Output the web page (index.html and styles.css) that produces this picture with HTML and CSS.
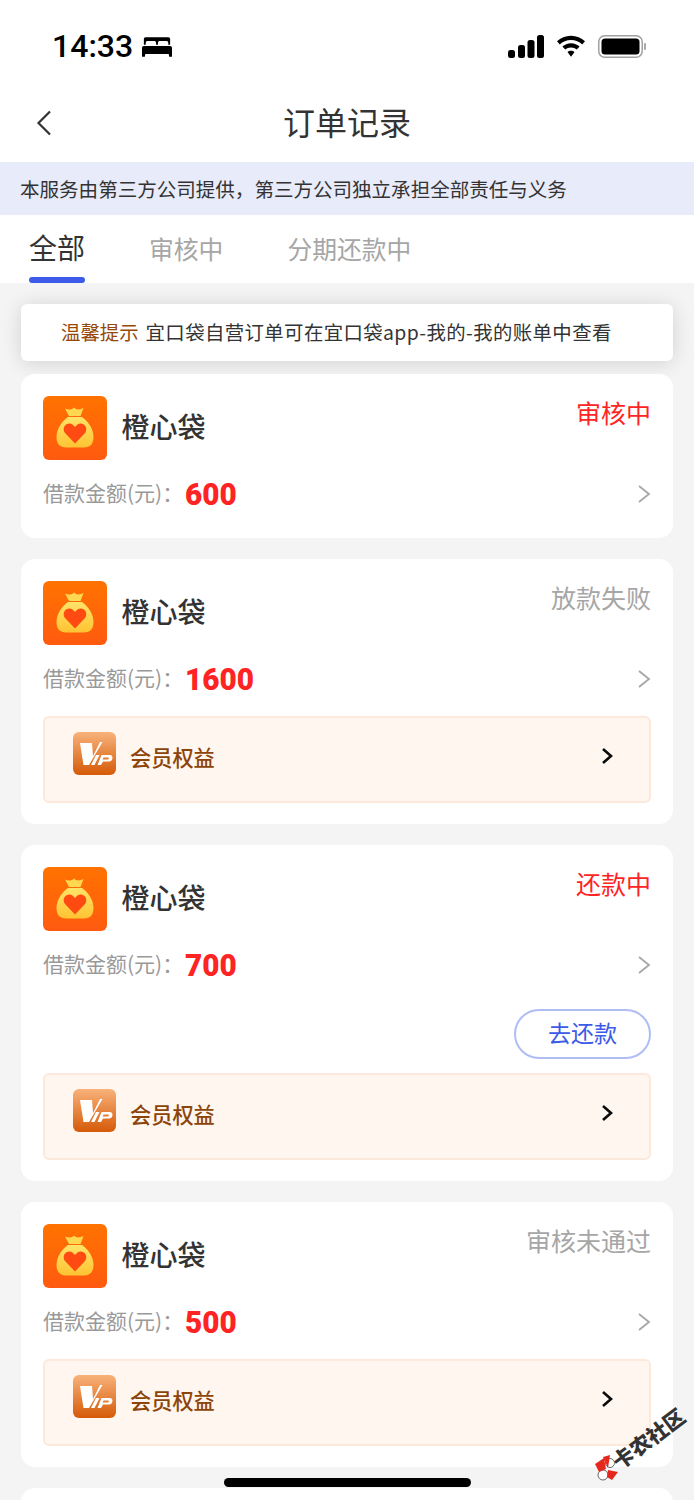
FILE: index.html
```html
<!DOCTYPE html>
<html lang="zh-CN">
<head>
    <meta charset="UTF-8">
    <meta name="viewport" content="width=device-width, initial-scale=1.0">
    <title>订单记录</title>
    <link rel="stylesheet" href="styles.css">
</head>
<body>
    <svg class="defs" width="0" height="0">
        <defs>
            <linearGradient id="appBg" x1="0" y1="0" x2="0" y2="1">
                <stop offset="0" stop-color="#ff7300"/>
                <stop offset="1" stop-color="#ff5a10"/>
            </linearGradient>
            <linearGradient id="bagFill" x1="0" y1="0" x2="0" y2="1">
                <stop offset="0" stop-color="#ffe368"/>
                <stop offset="1" stop-color="#ffc332"/>
            </linearGradient>
            <linearGradient id="vipBg" x1="0" y1="0" x2="0" y2="1">
                <stop offset="0" stop-color="#f8b27a"/>
                <stop offset="1" stop-color="#d55a08"/>
            </linearGradient>
            <symbol id="appIcon" viewBox="0 0 64 64">
                <rect width="64" height="64" rx="6" fill="url(#appBg)"/>
                <path d="M22 12.500 C25 14 29 14 31 11.500 C33 14 37 14 40.500 12 L37.500 20 H26 Z" fill="#ffd750"/>
                <path d="M25 21 H39 C45 25 50.500 33 50.500 41 C50.500 48 47 51.500 41 51.500 H23 C17 51.500 13.500 48 13.500 41 C13.500 33 19 25 25 21 Z" fill="url(#bagFill)"/>
                <path d="M32 47.500 L22 37 C19.500 34 20.500 28 26 27.500 C28.500 27.300 30.500 29 32 31 C33.500 29 35.500 27.300 38 27.500 C43.500 28 44.500 34 42 37 Z" fill="#ff4a12"/>
            </symbol>
            <symbol id="vipIcon" viewBox="0 0 43 43">
                <rect width="43" height="43" rx="6" fill="url(#vipBg)"/>
                <path d="M7 11 H19 L20 24 L27 10 H29.500 L16 33 H10.500 Z" fill="#fff"/>
                <path d="M23 23 H26.500 L21.500 33 H18 Z" fill="#fff"/>
                <path fill-rule="evenodd" d="M28.500 23 H37 C40 23 40 27 38.500 28.500 C37.500 29.500 36 29.500 34 29.500 H30 L28 33 H24.500 Z M30.500 25.500 L29.500 27.500 H34.500 C36 27.500 36.500 25.500 35 25.500 Z" fill="#fff"/>
            </symbol>
            <symbol id="vipChevron" viewBox="0 0 12 18">
                <path d="M2 2 L10 9 L2 16" fill="none" stroke="#0a0a0a" stroke-width="2.600"/>
            </symbol>
            <symbol id="rowChevron" viewBox="0 0 14 20">
                <path d="M2 2 L12 10 L2 18" fill="none" stroke="#a6a6a6" stroke-width="1.800"/>
            </symbol>
        </defs>
    </svg>

    <div class="page">
        <div class="status-bar">
            <div class="status-left">
                <span class="time">14:33</span>
                <svg class="bed" viewBox="0 0 32 22" width="30" height="21">
                    <path fill="#000" d="M4 1 H28 C29.500 1 30 2 30 3 V9 H28 V7 C28 5.500 27 5 26 5 H19 C18 5 17 5.500 17 7 V9 H15 V7 C15 5.500 14 5 13 5 H6 C5 5 4 5.500 4 7 V9 H2 V3 C2 2 2.500 1 4 1 Z M2 10.500 H30 C31 10.500 32 11.500 32 12.500 V19 H32 V22 H29 L28.500 19 H3.500 L3 22 H0 V12.500 C0 11.500 1 10.500 2 10.500 Z"/>
                </svg>
            </div>
            <div class="status-right">
                <svg width="36" height="23" viewBox="0 0 36 23">
                    <rect x="0" y="15" width="7" height="8" rx="2.500"/>
                    <rect x="10" y="10" width="7" height="13" rx="2.500"/>
                    <rect x="19.500" y="5" width="7" height="18" rx="2.500"/>
                    <rect x="29" y="0" width="7" height="23" rx="2.500"/>
                </svg>
                <svg width="28" height="23" viewBox="0 0 30 23">
                    <path d="M15 0 C21 0 26 2.400 30 6 L27 9.300 C24 6.400 19.800 4.600 15 4.600 C10.200 4.600 6 6.400 3 9.300 L0 6 C4 2.400 9 0 15 0 Z M15 8 C18.600 8 21.800 9.400 24.200 11.500 L21.200 14.700 C19.600 13.300 17.500 12.500 15 12.500 C12.500 12.500 10.400 13.300 8.800 14.700 L5.800 11.500 C8.200 9.400 11.400 8 15 8 Z M15 16 C16.500 16 17.800 16.500 18.800 17.400 L15 22.500 L11.200 17.400 C12.200 16.500 13.500 16 15 16 Z"/>
                </svg>
                <svg width="49" height="23" viewBox="0 0 49 23">
                    <rect x="0.750" y="0.750" width="43.500" height="21.500" rx="6" fill="none" stroke="#a0a0a0" stroke-width="1.500"/>
                    <rect x="3.500" y="3.500" width="38" height="16" rx="3.500"/>
                    <rect x="46" y="8" width="2" height="7" rx="1" fill="#a8a8a8"/>
                </svg>
            </div>
        </div>

        <div class="nav-bar">
            <svg class="back" width="16" height="26" viewBox="0 0 16 26">
                <path d="M14 1.500 L2.500 13 L14 24.500" fill="none" stroke="#333" stroke-width="2.200"/>
            </svg>
            <div class="nav-title">订单记录</div>
        </div>

        <div class="banner">本服务由第三方公司提供，第三方公司独立承担全部责任与义务</div>

        <div class="tabs">
            <div class="tab active">全部</div>
            <div class="tab">审核中</div>
            <div class="tab">分期还款中</div>
        </div>

        <div class="content">
            <div class="notice"><span class="notice-label">温馨提示</span><span class="notice-text">宜口袋自营订单可在宜口袋app-我的-我的账单中查看</span></div>

            <div class="card">
                <div class="card-head">
                    <svg class="app-icon"><use href="#appIcon"/></svg>
                    <div class="app-name">橙心袋</div>
                    <div class="state red">审核中</div>
                </div>
                <div class="amount-row">
                    <span class="amount-label">借款金额(元)：</span>
                    <span class="amount">600</span>
                    <svg class="chevron"><use href="#rowChevron"/></svg>
                </div>
            </div>

            <div class="card">
                <div class="card-head">
                    <svg class="app-icon"><use href="#appIcon"/></svg>
                    <div class="app-name">橙心袋</div>
                    <div class="state">放款失败</div>
                </div>
                <div class="amount-row">
                    <span class="amount-label">借款金额(元)：</span>
                    <span class="amount">1600</span>
                    <svg class="chevron"><use href="#rowChevron"/></svg>
                </div>
                <div class="vip">
                    <svg class="vip-icon"><use href="#vipIcon"/></svg>
                    <span class="vip-text">会员权益</span>
                    <svg class="vip-chevron"><use href="#vipChevron"/></svg>
                </div>
            </div>

            <div class="card">
                <div class="card-head">
                    <svg class="app-icon"><use href="#appIcon"/></svg>
                    <div class="app-name">橙心袋</div>
                    <div class="state red">还款中</div>
                </div>
                <div class="amount-row">
                    <span class="amount-label">借款金额(元)：</span>
                    <span class="amount">700</span>
                    <svg class="chevron"><use href="#rowChevron"/></svg>
                </div>
                <div class="actions"><div class="repay">去还款</div></div>
                <div class="vip tight">
                    <svg class="vip-icon"><use href="#vipIcon"/></svg>
                    <span class="vip-text">会员权益</span>
                    <svg class="vip-chevron"><use href="#vipChevron"/></svg>
                </div>
            </div>

            <div class="card">
                <div class="card-head">
                    <svg class="app-icon"><use href="#appIcon"/></svg>
                    <div class="app-name">橙心袋</div>
                    <div class="state">审核未通过</div>
                </div>
                <div class="amount-row">
                    <span class="amount-label">借款金额(元)：</span>
                    <span class="amount">500</span>
                    <svg class="chevron"><use href="#rowChevron"/></svg>
                </div>
                <div class="vip">
                    <svg class="vip-icon"><use href="#vipIcon"/></svg>
                    <span class="vip-text">会员权益</span>
                    <svg class="vip-chevron"><use href="#vipChevron"/></svg>
                </div>
            </div>

            <div class="card empty"></div>
        </div>

        <div class="home-bar"></div>

        <div class="watermark">
            <svg width="26" height="26" viewBox="0 0 26 26">
                <circle cx="16" cy="8" r="4.500" fill="#fff" stroke="#444" stroke-width="0.800"/>
                <circle cx="9" cy="20" r="5" fill="#fff" stroke="#444" stroke-width="0.800"/>
                <path d="M1 9 L10 3 L12 14 L5 17 Z M9 2 L16 0 L14 13 Z M14 15 L24 17 L18 25 L13 22 Z" fill="#e5281e"/>
            </svg>
            <span class="watermark-text">卡农社区</span>
        </div>
    </div>
</body>
</html>
```

FILE: styles.css
```css
body {
    margin: 0px;
    background-color: #f4f4f4;
    font-family: "Noto Sans CJK SC", "Noto Sans", sans-serif;
}

.defs {
    position: absolute;
}

.page {
    position: relative;
    width: 694px;
    height: 1500px;
    overflow: hidden;
    background-color: #f4f4f4;
}

.status-bar {
    display: flex;
    justify-content: space-between;
    align-items: center;
    height: 92px;
    padding: 0px 47px 0px 52px;
    box-sizing: border-box;
    background-color: white;
}

.status-left {
    display: flex;
    align-items: center;
    gap: 9px;
}

.time {
    font-family: Roboto, sans-serif;
    font-size: 32px;
    font-weight: 500;
    color: black;
}

.status-right {
    display: flex;
    align-items: center;
    gap: 13px;
}

.nav-bar {
    display: flex;
    justify-content: center;
    align-items: center;
    position: relative;
    height: 70px;
    padding-bottom: 12px;
    box-sizing: border-box;
    background-color: white;
}

.back {
    position: absolute;
    top: 18px;
    left: 36px;
}

.nav-title {
    font-size: 32px;
    color: #333;
}

.banner {
    height: 53px;
    line-height: 53px;
    padding-left: 20px;
    font-size: 19.55px;
    color: #333;
    background-color: #e8ebfa;
}

.tabs {
    display: flex;
    gap: 64px;
    height: 68px;
    padding-left: 29px;
    background-color: white;
}

.tab {
    height: 68px;
    line-height: 67px;
    font-size: 24.8px;
    color: #a6a6a6;
    position: relative;
}

.tab.active {
    font-size: 28px;
    line-height: 64px;
    color: #333;
}

.tab.active::after {
    content: "";
    position: absolute;
    left: 0px;
    right: 0px;
    bottom: 0px;
    height: 6px;
    border-radius: 3px;
    background-color: #3d5ae8;
}

.content {
    display: flex;
    flex-direction: column;
    gap: 21.1px;
    padding: 21px 21px 0px;
}

.notice {
    display: flex;
    align-items: center;
    gap: 8px;
    height: 57px;
    margin-bottom: -8.1px;
    padding: 0px 0px 2px 40px;
    box-sizing: border-box;
    border-radius: 6px;
    font-size: 19.4px;
    color: #333;
    background-color: white;
    box-shadow: 0px 2px 20px rgba(0, 0, 0, 0.14);
}

.notice-label {
    color: #96480a;
}

.notice-text {
    letter-spacing: 0.4px;
    margin-left: -1px;
}

.card {
    padding: 22px;
    border-radius: 14px;
    background-color: white;
}

.card.empty {
    height: 60px;
}

.card-head {
    display: flex;
    align-items: center;
    height: 64px;
    position: relative;
}

.app-icon {
    width: 64px;
    height: 64px;
}

.app-name {
    margin: -4px 0px 0px 14.5px;
    font-size: 28px;
    font-weight: 500;
    color: #333;
}

.state {
    position: absolute;
    top: -2px;
    right: 0px;
    font-size: 25px;
    line-height: 36px;
    color: #a6a6a6;
}

.state.red {
    color: #ff2424;
}

.amount-row {
    display: flex;
    align-items: center;
    height: 44px;
    margin-top: 12px;
}

.amount-label {
    margin-top: -5px;
    font-size: 21px;
    color: #999;
}

.amount {
    margin-left: 2px;
    font-family: Roboto, sans-serif;
    font-size: 32px;
    font-weight: 900;
    color: #ff2424;
    transform: scaleX(0.93);
    transform-origin: left center;
}

.chevron {
    width: 14px;
    height: 20px;
    margin-left: auto;
    margin-top: -1px;
}

.actions {
    display: flex;
    justify-content: flex-end;
    margin-top: 22px;
}

.repay {
    width: 137px;
    height: 50px;
    line-height: 42px;
    text-align: center;
    border: 2px solid #b0bdf5;
    border-radius: 25px;
    box-sizing: border-box;
    font-size: 23px;
    color: #3d5ae8;
}

.vip {
    display: flex;
    align-items: center;
    height: 87px;
    margin-top: 15px;
    margin-bottom: -1px;
    box-sizing: border-box;
    border: 2px solid #fde8dc;
    border-radius: 6px;
    background-color: #fff6f0;
    padding: 0px 36px 0px 28px;
}

.vip.tight {
    margin-top: 14px;
}

.vip-icon {
    width: 43px;
    height: 43px;
    margin-top: -12px;
}

.vip-text {
    margin: -7px 0px 0px 14px;
    font-size: 21.2px;
    font-weight: 500;
    color: #8c4408;
}

.vip-chevron {
    width: 12px;
    height: 18px;
    margin-left: auto;
    margin-top: -8px;
}

.home-bar {
    position: absolute;
    left: 224px;
    bottom: 13px;
    width: 247px;
    height: 9px;
    border-radius: 5px;
    background-color: black;
}

/* logo stays upright, only the text is turned */
.watermark {
    position: absolute;
    left: 594px;
    top: 1455px;
    width: 26px;
    height: 26px;
}

.watermark-text {
    position: absolute;
    left: 12px;
    top: -32px;
    width: 84px;
    line-height: 30px;
    font-size: 21px;
    font-weight: 900;
    color: #333;
    white-space: nowrap;
    text-shadow: 0px 0px 2px white;
    transform: rotate(-37deg);
}
```
